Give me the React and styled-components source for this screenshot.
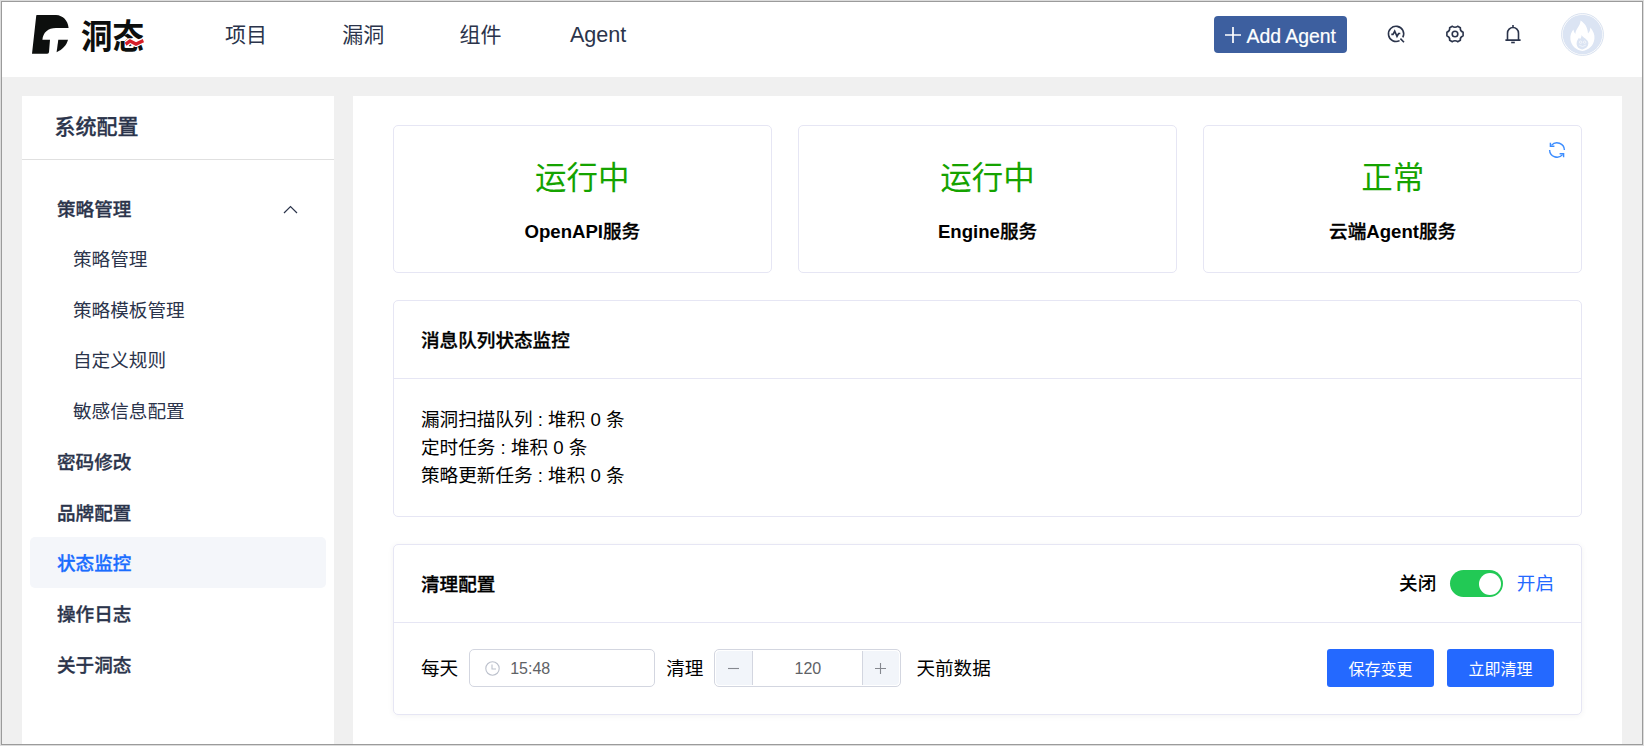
import React from "react";
import styled, { createGlobalStyle } from "styled-components";

const GlobalStyle = createGlobalStyle`
  * { box-sizing: border-box; }
  html, body { margin: 0; padding: 0; overflow: hidden; }
  body {
    font-family: "Liberation Sans", "Noto Sans CJK SC", sans-serif;
    font-size: 18.6px;
    color: #000;
    background: #dcdcdc;
  }
  button { font-family: inherit; border: 0; }
`;

const ink = "#2b344b";
const line = "#e6e6f4";
const blue = "#2469ff";

const Window = styled.div`
  width: 1644px;
  height: 746px;
  border: 1px solid #dcdcdc;
`;

const Screen = styled.div`
  height: 744px;
  border: 1px solid #9b9b9b;
  background: #f0f0f0;
  overflow: hidden;
  display: flex;
  flex-direction: column;
`;

const Header = styled.header`
  height: 75px;
  flex: none;
  background: #fff;
  display: flex;
  align-items: flex-start;
  padding: 11px 38.5px 0 30px;
`;

const Brand = styled.div`
  display: flex;
  height: 44px;
  width: 193px;
  padding-top: 2px;
`;

const BrandName = styled.div`
  position: relative;
  margin-left: 12px;
  height: 40px;
  font: 700 31.5px/38px "Noto Sans CJK SC", sans-serif;
  color: #0d0f0e;
  white-space: nowrap;
  transform: scaleY(1.1);
`;

const BrandWave = styled.svg`
  position: absolute;
  left: 43.5px;
  top: 23px;
`;

const Nav = styled.nav`
  display: flex;
  gap: 75.3px;
  flex: 1;
`;

const NavLink = styled.a`
  font-size: ${(p) => (p.$latin ? 21.6 : 21)}px;
  margin-left: ${(p) => (p.$latin ? -7 : 0)}px;
  line-height: 43px;
  height: 42px;
  color: ${ink};
  white-space: nowrap;
`;

const Tools = styled.div`
  display: flex;
  align-items: center;
  height: 42px;
`;

const AddButton = styled.button`
  display: flex;
  align-items: center;
  gap: 6px;
  width: 133px;
  height: 37px;
  padding: 1px 0 0 10.5px;
  margin-right: 38.5px;
  border-radius: 4px;
  background: #3d5f9f;
  color: #fff;
  font-size: 19.4px;
  line-height: 24px;
  -webkit-text-stroke: 0.2px;
  white-space: nowrap;
`;

const AddLabel = styled.span`
  padding-top: 2px;
`;

const ToolIcon = styled.svg`
  width: 20px;
  height: 20px;
  margin-right: ${(p) => p.$gap || 0}px;
  flex: none;
  fill: none;
  stroke: ${ink};
  stroke-width: 1.6;
`;

const Avatar = styled.svg`
  width: 43px;
  height: 43px;
  flex: none;
`;

const Body = styled.div`
  flex: 1;
  min-height: 0;
  display: flex;
  gap: 19px;
  padding: 19px 20px 0 20px;
`;

const Sidebar = styled.aside`
  width: 312px;
  flex: none;
  background: #fff;
`;

const SidebarTitle = styled.h2`
  margin: 0;
  height: 64px;
  padding-left: 32.5px;
  border-bottom: 1px solid #e0e0e0;
  font-size: 21px;
  font-weight: 500;
  -webkit-text-stroke: 0.3px;
  line-height: 61px;
  color: ${ink};
`;

const Menu = styled.ul`
  list-style: none;
  margin: 0;
  padding: 22.3px 8px 0;
`;

const MenuItem = styled.li`
  display: flex;
  align-items: center;
  justify-content: space-between;
  height: 50.7px;
  padding: 0 28px ${(p) => (p.$sub || p.$active ? 2 : 1)}px ${(p) => (p.$sub ? 43 : 27)}px;
  border-radius: 5px;
  font-weight: ${(p) => (p.$sub ? 400 : 500)};
  -webkit-text-stroke: ${(p) => (p.$sub ? 0 : 0.3)}px;
  color: ${(p) => (p.$active ? "#1a6dff" : ink)};
  background: ${(p) => (p.$active ? "#f4f6fa" : "transparent")};
`;

const Chevron = styled.svg`
  width: 15px;
  height: 9px;
  margin-top: 4px;
`;

const Main = styled.main`
  flex: 1;
  background: #fff;
  padding: 29px 40px 0;
  display: flex;
  flex-direction: column;
  gap: 27px;
`;

const Services = styled.div`
  display: grid;
  grid-template-columns: repeat(3, 1fr);
  gap: 26.5px;
`;

const ServiceCard = styled.section`
  position: relative;
  height: 148px;
  border: 1px solid ${line};
  border-radius: 5px;
  text-align: center;
  padding-top: 27px;
`;

const ServiceState = styled.div`
  font-size: 31.5px;
  line-height: 50px;
  color: #15a300;
`;

const ServiceName = styled.div`
  margin-top: 16px;
  font-weight: 700;
  line-height: 26px;
`;

const Cjk = styled.span`
  font-weight: 500;
  -webkit-text-stroke: 0.3px;
`;

const Refresh = styled.svg`
  position: absolute;
  top: 15px;
  right: 15px;
  width: 18px;
  height: 18px;
`;

const Panel = styled.section`
  height: ${(p) => p.$height}px;
  border: 1px solid ${line};
  border-radius: 5px;
  box-shadow: ${(p) => (p.$raised ? "0 1px 6px rgba(0,0,0,0.05)" : "none")};
`;

const PanelHead = styled.header`
  display: flex;
  align-items: center;
  justify-content: space-between;
  height: 78px;
  padding: 0 27px;
  border-bottom: 1px solid ${line};
`;

const PanelTitle = styled.h3`
  margin: 0 0 3px;
  font-size: 18.6px;
  font-weight: 500;
  -webkit-text-stroke: 0.3px;
`;

const QueueList = styled.div`
  padding: 27px 27px 0;
  line-height: 28px;
`;

const SwitchRow = styled.div`
  display: flex;
  align-items: center;
`;

const SwitchText = styled.span`
  margin-bottom: 4px;
  font-weight: ${(p) => (p.$on ? 400 : 500)};
  color: ${(p) => (p.$on ? blue : "#000")};
`;

const Toggle = styled.span`
  display: flex;
  justify-content: flex-end;
  align-items: center;
  width: 53px;
  height: 27px;
  margin: 0 14px 0 13.5px;
  padding-right: 2px;
  border-radius: 14px;
  background: #22c955;
`;

const Knob = styled.span`
  width: 22px;
  height: 22px;
  border-radius: 50%;
  background: #fff;
`;

const CleanRow = styled.div`
  display: flex;
  align-items: center;
  height: 38px;
  margin: 26px 27px 0;
`;

const RowText = styled.span`
  margin-bottom: 3px;
`;

const TimeField = styled.div`
  display: flex;
  align-items: center;
  gap: 10px;
  width: 186px;
  height: 38px;
  margin: 0 11px 0 11px;
  padding-left: 15px;
  border: 1px solid #d3d6e0;
  border-radius: 5px;
  font-size: 16px;
  color: #606266;
`;

const TimeValue = styled.span`
  padding-top: 2px;
`;

const Stepper = styled.div`
  display: flex;
  width: 187px;
  height: 38px;
  margin: 0 15px 0 11px;
  padding: 1px;
  border: 1px solid #d3d6e0;
  border-radius: 5px;
`;

const StepButton = styled.button`
  width: 37px;
  padding: 0 1px 0 0;
  display: flex;
  align-items: center;
  justify-content: center;
  background: #f2f5fa;
  border-radius: ${(p) => (p.$end ? "0 4px 4px 0" : "4px 0 0 4px")};
  border-left: ${(p) => (p.$end ? "1px solid #d3d6e0" : "0")};
  border-right: ${(p) => (p.$end ? "0" : "1px solid #d3d6e0")};
`;

const StepValue = styled.div`
  flex: 1;
  text-align: center;
  font-size: 16px;
  line-height: 36px;
  color: #606266;
`;

const Actions = styled.div`
  display: flex;
  gap: 13px;
  margin-left: auto;
`;

const ActionButton = styled.button`
  width: 107px;
  height: 38px;
  padding: 0;
  border-radius: 3px;
  background: ${blue};
  color: #fff;
  font-size: 16px;
  font-weight: 400;
`;

const menu = [
  { label: "策略管理", open: true },
  { label: "策略管理", sub: true },
  { label: "策略模板管理", sub: true },
  { label: "自定义规则", sub: true },
  { label: "敏感信息配置", sub: true },
  { label: "密码修改" },
  { label: "品牌配置" },
  { label: "状态监控", active: true },
  { label: "操作日志" },
  { label: "关于洞态" },
];

const services = [
  { state: "运行中", latin: "OpenAPI", after: "服务" },
  { state: "运行中", latin: "Engine", after: "服务" },
  { state: "正常", before: "云端", latin: "Agent", after: "服务", refresh: true },
];

const queues = [
  ["漏洞扫描队列", 0],
  ["定时任务", 0],
  ["策略更新任务", 0],
];

function BrandMark() {
  return (
    <svg width="37" height="39" viewBox="0 0 37 39">
      <path
        d="M4.8 0H24C31 .4 36 5.5 36.6 13H24C16 13 11 17.5 10.4 24.8H18L17 37Q17 38.8 15.2 38.8H0L4.2 1Q4.3 0 4.8 0Z"
        fill="#0d0f0e"
      />
      <path d="M26.3 24.8H36C34.5 30.5 30.5 34.5 24.6 37.2Z" fill="#0d0f0e" />
    </svg>
  );
}

function RefreshIcon() {
  return (
    <Refresh viewBox="0 0 18 18" fill="none" stroke="#3c8dff" strokeWidth="1.4">
      <path d="M3.4 4.4A7.4 7.4 0 0 1 16.4 9" />
      <path d="M2.4 1.7V5.2H6.4" />
      <path d="M14.6 13.6A7.4 7.4 0 0 1 1.6 9" />
      <path d="M15.6 16.3V12.8H11.6" />
    </Refresh>
  );
}

export default function App() {
  return (
    <>
      <GlobalStyle />
      <Window>
        <Screen>
          <Header>
            <Brand>
              <BrandMark />
              <BrandName>
                洞态
                <BrandWave width="19" height="8" viewBox="0 0 19 8">
                  <path
                    d="M1 5.2 5 2.2 11 5.2 18 2"
                    fill="none"
                    stroke="#fff"
                    strokeWidth="5.6"
                  />
                  <path
                    d="M.6 5.4 5 2.4 11 5.2 18.4 2.2"
                    fill="none"
                    stroke="#d6202a"
                    strokeWidth="3.2"
                  />
                </BrandWave>
              </BrandName>
            </Brand>
            <Nav>
              <NavLink>项目</NavLink>
              <NavLink>漏洞</NavLink>
              <NavLink>组件</NavLink>
              <NavLink $latin>Agent</NavLink>
            </Nav>
            <Tools>
              <AddButton>
                <svg width="16" height="16" viewBox="0 0 16 16">
                  <path d="M8 0V16M0 8H16" stroke="#fff" strokeWidth="1.7" />
                </svg>
                <AddLabel>Add Agent</AddLabel>
              </AddButton>
              <ToolIcon $gap={39} viewBox="0 0 20 20">
                <path d="M13.6 16.6A7.6 7.6 0 1 1 16.8 13.4" />
                <path d="M14.4 14.6 18 18.2" />
                <path d="M5.3 10.4H7L8.7 7.2 11 12.4 12.6 9.5H14.3" />
              </ToolIcon>
              <ToolIcon $gap={38} viewBox="0 0 20 20">
                <path d="M7.3 2.3Q10 4.1 12.7 2.3L15.3 3.8Q14.9 7 18.1 8.3V11.7Q14.9 13 15.3 16.2L12.7 17.7Q10 15.9 7.3 17.7L4.7 16.2Q5.1 13 1.9 11.7V8.3Q5.1 7 4.7 3.8Z" />
                <circle cx="10" cy="10" r="2.8" />
              </ToolIcon>
              <ToolIcon $gap={38} viewBox="0 0 20 20">
                <path d="M2.4 16.1H17.6M4.5 16V9.2A5.5 5.7 0 0 1 15.5 9.2V16M10 1V3.5" />
                <path d="M8.2 18.5H11.8" />
              </ToolIcon>
              <Avatar viewBox="0 0 43 43">
                <circle cx="21.5" cy="21.5" r="20.9" fill="#fff" stroke="#cdd8ea" strokeWidth=".8" />
                <circle cx="21.5" cy="21.5" r="19.8" fill="#dbe4f3" />
                <path
                  d="M19.6 7.5C24.5 11 26.6 14.5 27 20.5Q29.4 18.6 29.4 14.6C32.2 18 34 21.8 33.4 26C32.6 32.5 28 37 21.5 37.9C15 37 10 32.5 9.4 26.2C9 22 10.4 19 12.4 16.4Q12.8 19.4 14.4 21C14.6 15.6 19.2 13.5 19.6 7.5Z"
                  fill="#fff"
                />
                <path
                  d="M20.6 22C21.4 24.6 27.6 26.2 27.4 30.6C27.1 34 24.8 35.8 21.5 36.4C18 35.8 15.6 34 15.6 30.4C15.6 27.8 17.4 26 18 24.6L19 26.2Q20.6 24.8 20.6 22Z"
                  fill="#dbe4f3"
                />
                <g fill="none" stroke="#fff" strokeWidth=".6">
                  <circle cx="19.6" cy="29.2" r="1.2" />
                  <circle cx="23.6" cy="29.2" r="1.2" />
                  <path d="M18.2 32.2Q21.5 34.8 24.8 32.2" />
                </g>
              </Avatar>
            </Tools>
          </Header>
          <Body>
            <Sidebar>
              <SidebarTitle>系统配置</SidebarTitle>
              <Menu>
                {menu.map((m, i) => (
                  <MenuItem key={i} $sub={m.sub} $active={m.active}>
                    {m.label}
                    {m.open && (
                      <Chevron viewBox="0 0 15 9">
                        <path d="M1 8 7.5 1.5 14 8" fill="none" stroke={ink} strokeWidth="1.2" />
                      </Chevron>
                    )}
                  </MenuItem>
                ))}
              </Menu>
            </Sidebar>
            <Main>
              <Services>
                {services.map((s) => (
                  <ServiceCard key={s.latin}>
                    <ServiceState>{s.state}</ServiceState>
                    <ServiceName>
                      {s.before && <Cjk>{s.before}</Cjk>}
                      {s.latin}
                      <Cjk>{s.after}</Cjk>
                    </ServiceName>
                    {s.refresh && <RefreshIcon />}
                  </ServiceCard>
                ))}
              </Services>
              <Panel $height={217}>
                <PanelHead>
                  <PanelTitle>消息队列状态监控</PanelTitle>
                </PanelHead>
                <QueueList>
                  {queues.map(([name, count]) => (
                    <div key={name}>
                      {name} : 堆积 {count} 条
                    </div>
                  ))}
                </QueueList>
              </Panel>
              <Panel $height={171} $raised>
                <PanelHead>
                  <PanelTitle>清理配置</PanelTitle>
                  <SwitchRow>
                    <SwitchText>关闭</SwitchText>
                    <Toggle>
                      <Knob />
                    </Toggle>
                    <SwitchText $on>开启</SwitchText>
                  </SwitchRow>
                </PanelHead>
                <CleanRow>
                  <RowText>每天</RowText>
                  <TimeField>
                    <svg width="15" height="15" viewBox="0 0 15 15" fill="none" stroke="#bcc1cc" strokeWidth="1.1">
                      <circle cx="7.5" cy="7.5" r="6.7" />
                      <path d="M7 3.4V8H11" />
                    </svg>
                    <TimeValue>15:48</TimeValue>
                  </TimeField>
                  <RowText>清理</RowText>
                  <Stepper>
                    <StepButton>
                      <svg width="11" height="11" viewBox="0 0 11 11">
                        <path d="M0 5.5H11" stroke="#85888f" strokeWidth="1.1" />
                      </svg>
                    </StepButton>
                    <StepValue>120</StepValue>
                    <StepButton $end>
                      <svg width="11" height="11" viewBox="0 0 11 11">
                        <path d="M0 5.5H11M5.5 0V11" stroke="#85888f" strokeWidth="1.1" />
                      </svg>
                    </StepButton>
                  </Stepper>
                  <RowText>天前数据</RowText>
                  <Actions>
                    <ActionButton>保存变更</ActionButton>
                    <ActionButton>立即清理</ActionButton>
                  </Actions>
                </CleanRow>
              </Panel>
            </Main>
          </Body>
        </Screen>
      </Window>
    </>
  );
}
